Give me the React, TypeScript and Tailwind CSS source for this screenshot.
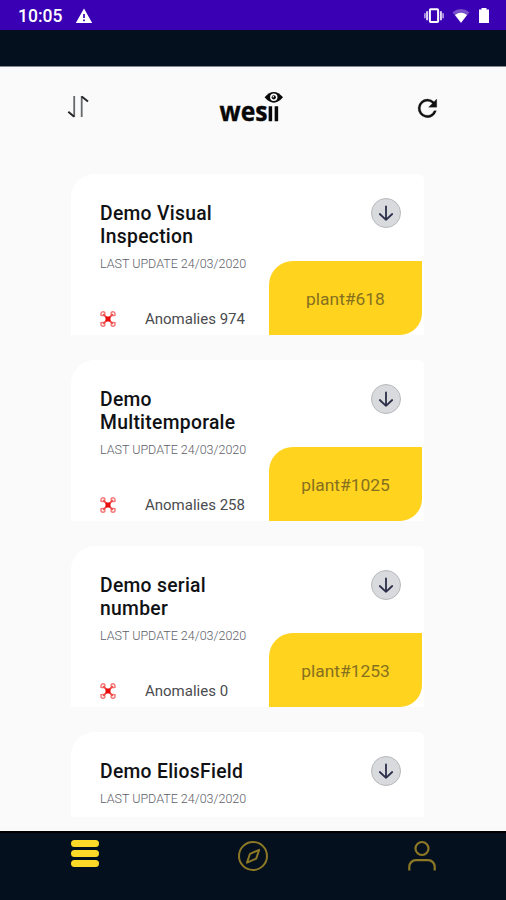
import React from "react";

type Plant = { id: number; lines: string[]; anomalies: number };

const plants: Plant[] = [
  { id: 618, lines: ["Demo Visual", "Inspection"], anomalies: 974 },
  { id: 1025, lines: ["Demo", "Multitemporale"], anomalies: 258 },
  { id: 1253, lines: ["Demo serial", "number"], anomalies: 0 },
];

function StatusBar() {
  return (
    <div className="flex h-[30px] shrink-0 items-center bg-[#3a00b3] pl-[18px] pr-[16px] pt-[2px] text-white">
      <span className="w-[45px] whitespace-nowrap text-[17.5px] font-medium leading-5">10:05</span>
      <svg className="ml-[12px]" width="18" height="16" viewBox="0 0 18 16">
        <path d="M9 .5 17.2 15H.8Z" fill="#fff" />
        <path d="M9 6v4M9 11.5v1.8" stroke="#3a00b3" strokeWidth="1.7" />
      </svg>
      <div className="ml-auto flex items-center pb-[1px]">
        <svg width="22" height="18" viewBox="0 0 22 18">
          <rect x="6.9" y="2.2" width="8.2" height="12.8" rx=".8" fill="none" stroke="#fff" strokeWidth="2" />
          <path d="M4.1 4.2v9M17.9 4.2v9" stroke="#e0d3f6" strokeWidth="2" />
          <path d="M1.9 6.2v5M20.1 6.2v5" stroke="#ad91df" strokeWidth="1.8" />
        </svg>
        <svg className="ml-[7px]" width="18" height="16" viewBox="0 0 18 16">
          <path d="M.5 4.2Q9-2.2 17.5 4.2L9 15Z" fill="#7950cc" />
          <path d="M3 7Q9 2.6 15 7L9 14.8Z" fill="#fff" />
        </svg>
        <svg className="ml-[8px]" width="12" height="17" viewBox="0 0 12 17">
          <path d="M1 2.5h2.5V1h5v1.5H11V16H1Z" fill="#fff" />
        </svg>
      </div>
    </div>
  );
}

function Logo() {
  return (
    <svg width="66" height="38" viewBox="0 0 66 38">
      <text x="1.5" y="31.3" textLength="48" lengthAdjust="spacingAndGlyphs" fontFamily="Open Sans, sans-serif" fontWeight="700" fontSize="26.5" fill="#080808" stroke="#080808" strokeWidth=".4">wes</text>
      <path d="M52.4 16.3v15M58.4 16.3v15" stroke="#080808" strokeWidth="3.5" />
      <path d="M46.6 7.3Q55.8-3.5 65 7.3 55.8 18.1 46.6 7.3Z" fill="#080808" />
      <circle cx="55.8" cy="7.3" r="3.7" fill="#fafafa" />
      <circle cx="55.8" cy="7.3" r="2.1" fill="#080808" />
      <circle cx="55.3" cy="6.8" r=".8" fill="#fff" />
    </svg>
  );
}

function Header() {
  return (
    <header className="flex h-[107px] shrink-0 items-start justify-between pl-[67px] pr-[66px] pt-[23px]">
      <svg className="mt-[4px]" width="22" height="26" viewBox="0 0 22 26" fill="none" stroke="#25282b">
        <path d="M7.2 2v21M14.7 23V2" strokeWidth="1.8" stroke="#66696b" />
        <path d="m1.3 17.8 5.9 5M14.7 2.5l6.3 5" strokeWidth="2" />
      </svg>
      <Logo />
      <svg className="mt-[4px]" width="28" height="28" viewBox="0 0 24 24" fill="#111">
        <path d="M17.65 6.35A7.96 7.96 0 0 0 12 4a8 8 0 1 0 7.73 10h-2.08A6 6 0 1 1 12 6c1.66 0 3.14.69 4.22 1.78L13 11h7V4z" transform="translate(1.2 .3)" stroke="#111" strokeWidth=".2" />
      </svg>
    </header>
  );
}

function DroneIcon() {
  return (
    <svg width="16" height="16" viewBox="0 0 16 16" fill="none" stroke="#f57575">
      <path d="M1 5V2.8A2 2 0 0 1 5 2.8M1 4.2Q3.8 5.6 5 2.8M15 5V2.8A2 2 0 0 0 11 2.8M15 4.2Q12.2 5.6 11 2.8M1 11v2.2a2 2 0 0 0 4 0M1 11.8q2.8-1.4 4 1.4M15 11v2.2a2 2 0 0 1-4 0M15 11.8q-2.8-1.4-4 1.4" strokeWidth="1.4" />
      <path d="m3.2 3.2 9.6 9.6M12.8 3.2l-9.6 9.6" stroke="#f04848" strokeWidth="1.9" />
      <rect x="5.5" y="5.6" width="5" height="4.8" rx="1" fill="#e80c0c" stroke="none" />
    </svg>
  );
}

function DownloadButton() {
  return (
    <button className="mr-[23px] mt-[24px] flex size-[30px] items-center justify-center rounded-full border-[1.5px] border-[#b7b9bb] bg-[#d8dade]">
      <svg width="18" height="18" viewBox="0 0 18 18" fill="none" stroke="#2b2f49" strokeWidth="1.8" strokeLinecap="round" strokeLinejoin="round">
        <path d="M9 2.3v13.5M2.8 10l6.2 5.8 6.2-5.8" />
      </svg>
    </button>
  );
}

function CardHeading({ lines }: { lines: string[] }) {
  return (
    <>
      <h2 className="text-[19.3px] font-medium leading-[23px] tracking-[0.3px] text-[#101114]">
        {lines.map((line) => (
          <span key={line} className="block whitespace-nowrap">{line}</span>
        ))}
      </h2>
      <p className="mt-[8px] whitespace-nowrap text-[12.5px] font-light leading-4 text-[#5c6068]">LAST UPDATE 24/03/2020</p>
    </>
  );
}

function PlantCard({ plant }: { plant: Plant }) {
  return (
    <article className="flex h-[161px] w-[353px] shrink-0 rounded-tl-[24px] rounded-tr-[6px] bg-white">
      <div className="flex w-[198px] shrink-0 flex-col pl-[29px] pt-[28px]">
        <CardHeading lines={plant.lines} />
        <div className="mb-[6px] mt-auto flex items-center">
          <DroneIcon />
          <span className="ml-[29px] whitespace-nowrap text-[15px] leading-5 text-[#4a4b4e]">Anomalies {plant.anomalies}</span>
        </div>
      </div>
      <div className="flex w-[155px] flex-col items-end justify-between">
        <DownloadButton />
        <div className="mr-[2px] flex h-[74px] w-[153px] items-center justify-center rounded-br-[22px] rounded-tl-[24px] bg-[#ffd31e] pt-[3px] text-[17.4px] text-[#857020]">
          plant#{plant.id}
        </div>
      </div>
    </article>
  );
}

function BottomNav() {
  return (
    <nav className="flex h-[69px] shrink-0 items-start justify-between border-t-2 border-black bg-[#04101e] px-[69px] pt-[7px]">
      <div className="ml-[1px] flex w-[30px] flex-col items-center gap-[3px]">
        <span className="h-[7px] w-[28px] rounded-full bg-[#ffd928]" />
        <span className="h-[7px] w-[28px] rounded-full bg-[#ffd928]" />
        <span className="h-[7px] w-[28px] rounded-full bg-[#ffd928]" />
      </div>
      <svg className="ml-[-1px]" width="32" height="32" viewBox="0 0 32 32" fill="none" stroke="#8d7825" strokeWidth="2" strokeLinejoin="round">
        <circle cx="16" cy="16" r="14" />
        <path d="M22.2 9.8 19.2 18.6l-9.2 4 3-8.8Z" />
      </svg>
      <svg width="30" height="32" viewBox="0 0 30 32" fill="none" stroke="#8d7825" strokeWidth="2.2">
        <circle cx="15" cy="8.5" r="6.5" />
        <path d="M2.3 30.5v-3.8a6.5 6.5 0 0 1 6.5-6.5h12.4a6.5 6.5 0 0 1 6.5 6.5v3.8" />
      </svg>
    </nav>
  );
}

export default function App() {
  return (
    <main className="flex h-[900px] w-[506px] flex-col overflow-hidden bg-[#fafafa] font-[Roboto,sans-serif]">
      <StatusBar />
      <div className="h-[37px] shrink-0 border-b border-[#85858d] bg-[#04101e]" />
      <Header />
      <section className="ml-[71px] flex w-[353px] flex-1 flex-col gap-[25px]">
        {plants.map((plant) => <PlantCard key={plant.id} plant={plant} />)}
        <article className="flex h-[85px] justify-between rounded-tl-[24px] rounded-tr-[6px] bg-white pl-[29px]">
          <div className="pt-[28px]"><CardHeading lines={["Demo EliosField"]} /></div>
          <DownloadButton />
        </article>
      </section>
      <BottomNav />
    </main>
  );
}
